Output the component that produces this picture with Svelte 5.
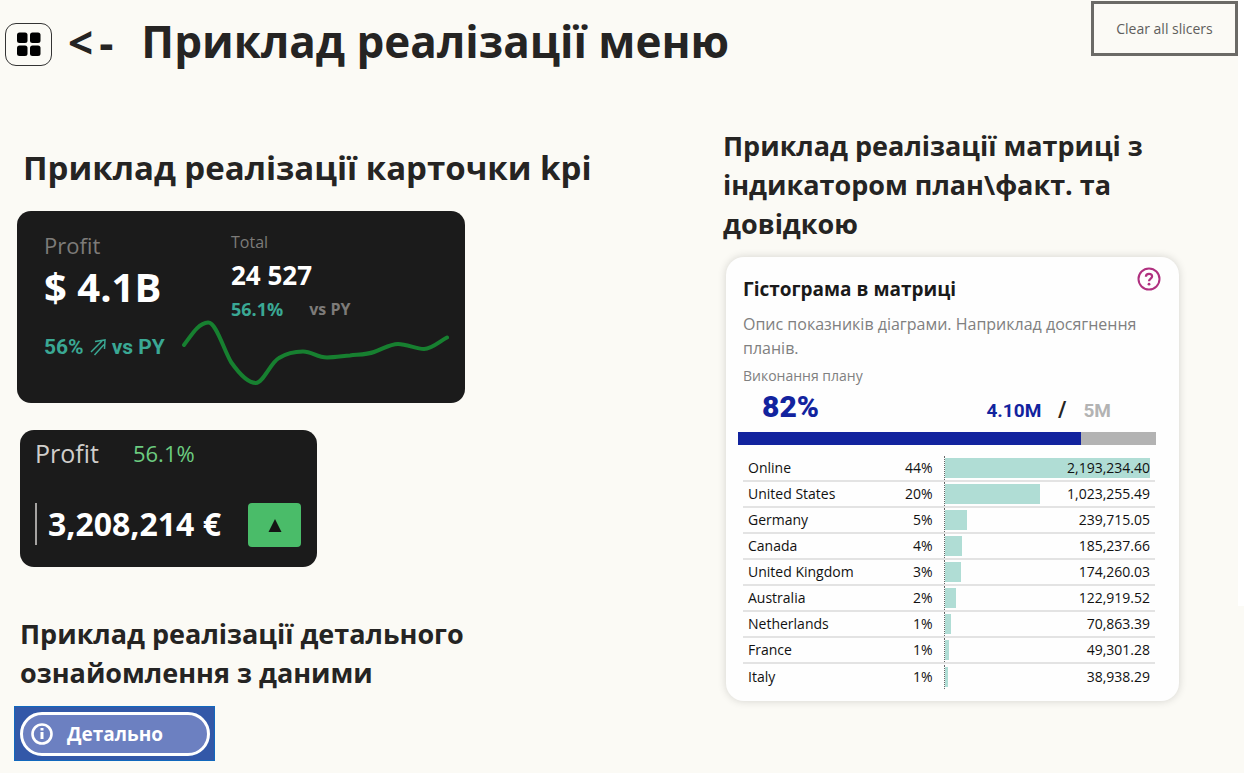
<script>
  const rows = [
    { name: 'Online', share: '44%', value: '2,193,234.40', bar: 100 },
    { name: 'United States', share: '20%', value: '1,023,255.49', bar: 46.6 },
    { name: 'Germany', share: '5%', value: '239,715.05', bar: 11 },
    { name: 'Canada', share: '4%', value: '185,237.66', bar: 8.4 },
    { name: 'United Kingdom', share: '3%', value: '174,260.03', bar: 7.9 },
    { name: 'Australia', share: '2%', value: '122,919.52', bar: 5.6 },
    { name: 'Netherlands', share: '1%', value: '70,863.39', bar: 3.2 },
    { name: 'France', share: '1%', value: '49,301.28', bar: 2.2 },
    { name: 'Italy', share: '1%', value: '38,938.29', bar: 1.8 }
  ];
  const progress = 82;
</script>

<div class="page">
  <header>
    <button class="menu" aria-label="Меню">
      <svg width="24" height="24" viewBox="0 0 24 24">
        <rect x="0" y="0.500" width="10.500" height="10.500" rx="2.500" />
        <rect x="13" y="0.500" width="10.500" height="10.500" rx="2.500" />
        <rect x="0" y="13.500" width="10.500" height="10.500" rx="2.500" />
        <rect x="13" y="13.500" width="10.500" height="10.500" rx="2.500" />
      </svg>
    </button>
    <span class="arrow"><span>&lt;</span><span>-</span></span>
    <h1>Приклад реалізації меню</h1>
    <button class="clear">Clear all slicers</button>
  </header>

  <main>
    <div class="left">
      <h2 class="big">Приклад реалізації карточки kpi</h2>

      <section class="kpi">
        <div class="summary">
          <span class="caption">Profit</span>
          <strong class="amount">$ 4.1B</strong>
          <span class="trend">
            56%
            <svg width="16" height="18" viewBox="0 0 16 18" fill="none" stroke="currentColor" stroke-width="1.500">
              <path d="M1 14 L12 3 M4.500 17 L14 6.500 M5 3.500 L15 2 L14.500 11" />
            </svg>
            vs PY
          </span>
        </div>
        <div class="detail">
          <div class="stats">
            <span class="total">Total</span>
            <strong class="count">24 527</strong>
            <span class="compare"><b>56.1%</b><i>vs PY</i></span>
          </div>
          <svg class="spark" viewBox="0 0 270 68" fill="none" stroke="#178030" stroke-width="4" stroke-linecap="round">
            <path d="M3 27 C10 18 17 5 27 4.500 C35 4 42 30 50 44 C57 54 67 65 75 65 C82 65 90 44 98 40 C106 35 114 33.500 122 33.500 C131 33.500 136 39.500 146 39.500 C154 39.500 162 38 169 37.500 C178 36.500 186 36.500 193 34 C202 31 209 26 217 26 C226 26 235 31 243 31 C251 31 259 23 266 19.500" />
          </svg>
        </div>
      </section>

      <section class="mini">
        <div class="mini-top"><span>Profit</span><em>56.1%</em></div>
        <div class="mini-bottom">
          <strong>3,208,214 €</strong>
          <span class="up">
            <svg width="14" height="13" viewBox="0 0 14 13"><path d="M7 0 L13.500 13 H.5 Z" fill="#141414" /></svg>
          </span>
        </div>
      </section>

      <h2 class="details">Приклад реалізації детального ознайомлення з даними</h2>
      <button class="more">
        <span>
          <svg width="22" height="22" viewBox="0 0 22 22" fill="none" stroke="#fff">
            <circle cx="11" cy="11" r="9.500" stroke-width="2.600" />
            <path d="M11 9 V16" stroke-width="3" />
            <path d="M11 5 V7.500" stroke-width="3" />
          </svg>
          Детально
        </span>
      </button>
    </div>

    <div class="right">
      <h2>Приклад реалізації матриці з індикатором план\факт. та довідкою</h2>

      <section class="matrix">
        <button class="help" aria-label="Довідка">
          <svg width="24" height="24" viewBox="0 0 24 24" fill="none" stroke="#b0307f">
            <circle cx="12" cy="12" r="10.500" stroke-width="2" />
            <path d="M8.900 9.700 C8.900 7.800 10.100 6.900 12 6.900 C13.900 6.900 15.100 7.900 15.100 9.400 C15.100 11.500 12 11.700 12 14.300" stroke-width="2.200" />
            <circle cx="12" cy="17.200" r="1.400" fill="#b0307f" stroke="none" />
          </svg>
        </button>
        <h3>Гістограма в матриці</h3>
        <p class="about">Опис показників діаграми. Наприклад досягнення планів.</p>
        <p class="plan">Виконання плану</p>
        <div class="figures">
          <strong>{progress}%</strong>
          <span class="fact">4.10M</span>
          <span class="slash">/</span>
          <span class="goal">5M</span>
        </div>
        <div class="progress"><div style="width: {progress}%"></div></div>
        <table>
          <tbody>
            {#each rows as row}
              <tr>
                <th scope="row">{row.name}</th>
                <td class="share">{row.share}</td>
                <td class="value">
                  <div class="track"><div class="bar" style="width: {row.bar}%"></div><span>{row.value}</span></div>
                </td>
              </tr>
            {/each}
          </tbody>
        </table>
      </section>
    </div>
  </main>
</div>

<style>
  :global(body) {
    margin: 0;
    background: #fbfaf5;
  }
  .page {
    position: relative;
    font-family: "Open Sans", "Noto Sans", sans-serif;
    color: #252423;
    line-height: 1;
  }
  .page::after {
    content: "";
    position: absolute;
    top: 0;
    right: 0;
    width: 6px;
    height: 606px;
    background: #fff;
  }
  button {
    font-family: inherit;
    cursor: pointer;
  }
  h1, h2, h3, p { margin: 0; }
  header {
    display: flex;
    align-items: center;
    padding-left: 5px;
    padding-right: 6px;
    height: 88px;
  }
  .menu {
    width: 47px;
    height: 43px;
    padding: 0;
    display: grid;
    place-items: center;
    background: transparent;
    border: 1px solid #333;
    border-radius: 11px;
  }
  .arrow {
    display: flex;
    gap: 6px;
    padding-bottom: 4px;
    font-size: 44px;
    font-weight: 700;
    margin-left: 16px;
    margin-right: 28px;
  }
  h1 {
    padding-bottom: 6px;
    font-size: 44px;
    font-weight: 700;
  }
  .clear {
    align-self: flex-start;
    margin-top: 1px;
    margin-left: auto;
    width: 147px;
    height: 55px;
    background: transparent;
    border: 3px solid #6b6a66;
    color: #605e5c;
    font-size: 14px;
  }
  main {
    display: grid;
    grid-template-columns: 723fr 521fr;
  }
  h2 {
    font-size: 27px;
    line-height: 39px;
    font-weight: 700;
  }
  .left { padding-left: 14px; padding-top: 57px; }
  .big {
    font-size: 33px;
    line-height: 46px;
    padding-left: 9px;
  }
  .kpi {
    display: flex;
    width: 448px;
    height: 192px;
    box-sizing: border-box;
    margin: 20px 0 0 3px;
    padding: 21px 14px 16px 27px;
    background: #1b1b1b;
    border-radius: 14px;
  }
  .summary {
    display: flex;
    flex-direction: column;
    width: 137px;
    white-space: nowrap;
  }
  .caption { font-size: 22px; line-height: 26px; color: #7d7b79; }
  .amount { font-size: 40px; line-height: 58px; color: #fff; }
  .trend {
    display: flex;
    align-items: center;
    gap: 6px;
    margin-top: 19px;
    font: 700 21px/24px Roboto, sans-serif;
    color: #3aa894;
  }
  .detail { flex: 1; }
  .stats {
    display: flex;
    flex-direction: column;
    padding-left: 50px;
  }
  .total { font-size: 16px; line-height: 20px; color: #7d7b79; }
  .count { font-size: 26px; line-height: 46px; color: #fff; }
  .compare { display: flex; gap: 26px; font-size: 18px; line-height: 22px; }
  .compare b { color: #3aa894; }
  .compare i { font-style: normal; font-weight: 700; font-size: 16px; color: #7d7b79; }
  .spark { display: block; width: 100%; margin-top: -2px; }
  .mini {
    width: 297px;
    height: 137px;
    box-sizing: border-box;
    margin: 27px 0 0 6px;
    padding: 7px 16px 0 15px;
    background: #1b1b1b;
    border-radius: 14px;
  }
  .mini-top {
    display: flex;
    align-items: center;
    gap: 34px;
    font-size: 25px;
    line-height: 32px;
    color: #d0cecc;
  }
  .mini-top em { font-style: normal; font-size: 22px; color: #6ccb80; }
  .mini-bottom {
    display: flex;
    align-items: center;
    justify-content: space-between;
    margin-top: 32px;
  }
  .mini-bottom strong {
    border-left: 2px solid #a5a3a1;
    padding-left: 11px;
    font-size: 32px;
    line-height: 42px;
    color: #fff;
    white-space: nowrap;
  }
  .up {
    display: grid;
    place-items: center;
    width: 53px;
    height: 44px;
    margin-top: 2px;
    border-radius: 4px;
    background: #4abc69;
  }
  .details { margin-top: 47px; padding-left: 6px; max-width: 460px; }
  .more {
    display: block;
    width: 201px;
    height: 55px;
    margin-top: 14px;
    padding: 5px 4px 4px 5px;
    border: 1px solid #1168bd;
    background: #3358a8;
  }
  .more span {
    display: flex;
    align-items: center;
    gap: 14px;
    height: 44px;
    box-sizing: border-box;
    padding-left: 8px;
    border: 3px solid #fff;
    border-radius: 22px;
    background: #6c80c1;
    color: #fff;
    font-size: 19px;
    font-weight: 700;
  }
  .right { padding-top: 38px; padding-right: 65px; }
  .matrix {
    position: relative;
    margin: 14px 0 0 3px;
    padding: 19px 24px 12px 17px;
    background: #fefefe;
    border-radius: 18px;
    box-shadow: 0 0 8px rgba(0, 0, 0, 0.16);
  }
  .help {
    position: absolute;
    top: 10px;
    right: 18px;
    padding: 0;
    border: 0;
    background: none;
    line-height: 0;
  }
  h3 { font-size: 19px; line-height: 26px; color: #1a1a1a; }
  .about {
    margin: 10px 0 0;
    font-size: 16px;
    line-height: 24px;
    color: #808080;
  }
  .plan { margin-top: 6px; font-size: 14px; line-height: 20px; color: #808080; }
  .figures {
    display: flex;
    align-items: baseline;
    padding: 0 44px 0 19px;
    font: 700 19px/42px Roboto, sans-serif;
    color: #12239e;
  }
  .figures strong { font-size: 30px; margin-right: auto; }
  .slash { margin: 0 17px; font-size: 22px; color: #252423; }
  .goal { color: #b3b3b3; }
  .progress { height: 13px; margin: 0 -1px 0 -5px; background: #b3b3b3; }
  .progress div { height: 100%; background: #12239e; }
  table {
    width: 100%;
    margin-top: 10px;
    border-collapse: collapse;
    font-size: 14px;
    color: #111;
  }
  tr { height: 26px; }
  th, td { padding: 0; border-bottom: 2px solid #e3e3e3; }
  tr:last-child th, tr:last-child td { border-bottom: 0; }
  th { width: 28%; padding-left: 5px; text-align: left; font-weight: 400; white-space: nowrap; }
  .share { width: 18%; text-align: right; }
  .value { padding-left: 11px; padding-right: 5px; }
  .track {
    display: grid;
    align-items: center;
    height: 24px;
    border-left: 1px dotted #666;
  }
  .track > * { grid-area: 1 / 1; }
  .bar { height: 20px; background: #b0ddd5; }
  .track span { text-align: right; }
</style>
